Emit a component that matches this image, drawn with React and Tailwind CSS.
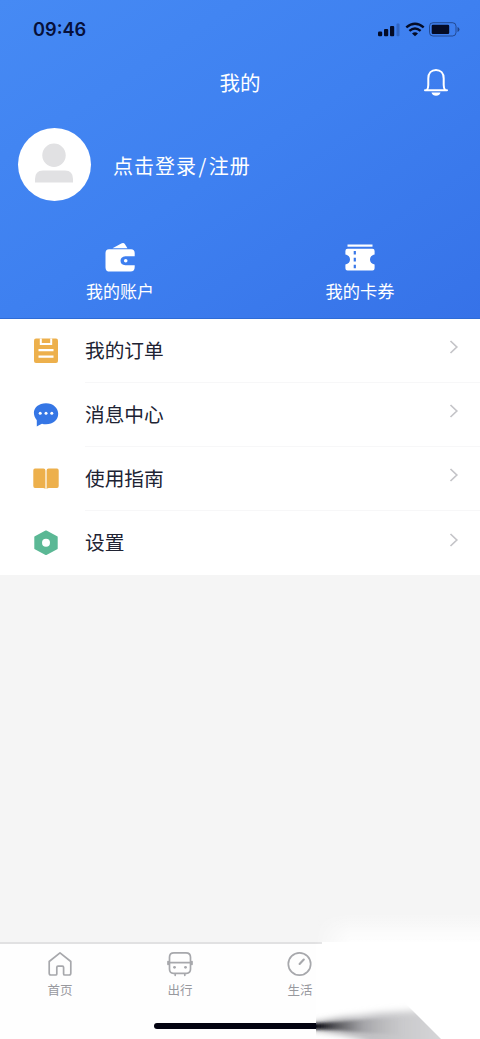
import React from 'react';

function StatusBar() {
  return (
    <div className="flex h-[58px] items-center justify-between pl-[33px] pr-[19px]">
      <span className="font-['Inter','Liberation_Sans',sans-serif] text-[18.2px] font-semibold leading-none text-[#07103a]">09:46</span>
      <svg width="84" height="18" viewBox="0 0 84 18" fill="#040b26">
        <rect x="1" y="11.5" width="4.2" height="4.7" rx="1.2" />
        <rect x="7" y="9" width="4.2" height="7.2" rx="1" />
        <rect x="13" y="6" width="4.2" height="10.2" rx="1" />
        <rect x="19.5" y="3.5" width="3" height="12.7" rx="1" opacity="0.22" />
        <g fill="none" stroke="#040b26" strokeWidth="2.4">
          <path d="M29.3 7.4Q38 0 46.7 7.4" />
          <path d="M32.4 10.9Q38 6.1 43.6 10.9" />
        </g>
        <path d="M35 13.5Q38 11.2 41 13.5L38 16.2Z" />
        <rect x="52.5" y="2.7" width="26.5" height="13.3" rx="3.5" fill="none" stroke="#040b26" strokeOpacity="0.45" />
        <rect x="54.7" y="4.7" width="17.5" height="9.3" rx="1.2" />
        <path d="M80.5 7v5q2-.8 2-2.5t-2-2.5z" opacity="0.5" />
      </svg>
    </div>
  );
}

function BellIcon() {
  return (
    <svg width="28" height="30" viewBox="0 0 28 30" fill="none" stroke="white" strokeWidth="2" strokeLinecap="round" strokeLinejoin="round">
      <path d="M3 22.3H25M4.8 22Q6.3 20.6 6.3 17V10.4C6.3 5.2 9.5 2 14 2S21.7 5.2 21.7 10.4V17Q21.7 20.6 23.2 22" />
      <path d="M9.5 24.5H18.5Q17.5 27.8 14 27.8T9.5 24.5Z" fill="white" stroke="none" />
    </svg>
  );
}

function WalletIcon() {
  return (
    <svg width="30" height="30" viewBox="0 0 30 30" fill="white">
      <path d="M7.5 6.2L16.8 1.3Q18.7.3 19.8 2L22.5 6.2Z" />
      <path d="M4 7.2H26Q29.7 7.2 29.7 11V14.2H20.4Q15.5 14.8 15.5 18.8T20.4 23.3H29.7V25Q29.7 29.6 25.5 29.6H5Q.5 29.6.5 25.4V11Q.5 7.2 4 7.2Z" />
      <circle cx="20.7" cy="18.8" r="1.8" />
    </svg>
  );
}

function CouponIcon() {
  return (
    <svg width="30" height="30" viewBox="0 0 30 30" fill="white">
      <rect x="2.5" y="2.5" width="25" height="2.2" />
      <path d="M2.5 6.8H27.5Q29.6 6.8 29.6 9V12.6Q25 13.6 25 17.6T29.6 22.6V26.3Q29.6 28.6 27.5 28.6H2.5Q.4 28.6 .4 26.3V22.6Q5 21.6 5 17.6T.4 12.6V9Q.4 6.8 2.5 6.8Z" />
      <path d="M9.8 9V12.5M9.8 15.7V19.5M9.8 22.7V26.2" stroke="#3978e9" strokeWidth="2.2" />
    </svg>
  );
}

function OrderIcon() {
  return (
    <svg width="26" height="26" viewBox="0 0 26 26">
      <rect x="1" y="0.5" width="24" height="24.5" rx="2" fill="#edb04c" />
      <path d="M7.8 0.5V6H18.2V0.5" fill="none" stroke="white" strokeWidth="2" />
      <path d="M5.5 12.2H20.5M5.5 18.7H20.5" stroke="white" strokeWidth="2.2" />
    </svg>
  );
}

function MessageIcon() {
  return (
    <svg width="26" height="26" viewBox="0 0 26 26">
      <path d="M3.8 18.3C-2.8 10 2.5 1.2 13 1.2C20.3 1.2 25.2 6 25.2 11.8C25.2 18 20.3 22.3 13 22.3Q10.8 22.3 9 21.8Q6.5 22.8 3.8 24.5Z" fill="#3576e5" />
      <g fill="white"><circle cx="7.2" cy="11.3" r="1.5" /><circle cx="13" cy="11.3" r="1.5" /><circle cx="18.8" cy="11.3" r="1.5" /></g>
    </svg>
  );
}

function GuideIcon() {
  return (
    <svg width="26" height="26" viewBox="0 0 26 26" fill="#edb04c">
      <path d="M2 2.5H10.5Q12.4 2.5 12.4 4.5V23Q11.5 22 10 22H2Q.3 22 .3 20V4.5Q.3 2.5 2 2.5ZM24 2.5H15.5Q13.6 2.5 13.6 4.5V23Q14.5 22 16 22H24Q25.7 22 25.7 20V4.5Q25.7 2.5 24 2.5Z" />
    </svg>
  );
}

function SettingsIcon() {
  return (
    <svg width="26" height="26" viewBox="0 0 26 26">
      <path d="M13 1.5L23.7 7.1V18.4L13 24L2.3 18.4V7.1Z" fill="#5bb895" stroke="#5bb895" strokeWidth="2" strokeLinejoin="round" />
      <circle cx="13" cy="12.8" r="4" fill="white" />
    </svg>
  );
}

function TabIcon({ kind }) {
  return (
    <svg width="28" height="28" viewBox="0 0 28 28" fill="none" stroke="#a7a8ac" strokeWidth="1.7" strokeLinejoin="round" strokeLinecap="round">
      {kind === 'home' && <path d="M14 2.8L24.8 11.5V23.3Q24.8 25 23 25H18.8Q17.6 25 17.6 24V17.4Q17.6 16.2 16.4 16.2H12Q10.8 16.2 10.8 17.4V24Q10.8 25 9.6 25H5Q3.2 25 3.2 23.3V11.5Z" />}
      {kind === 'bus' && <>
        <path d="M3.5 13V7.3Q3.5 2.8 8 2.8H20Q24.5 2.8 24.5 7.3V19Q24.5 23.3 20.5 23.3H7.5Q3.5 23.3 3.5 19ZM3.5 12.7H24.5M2 11.5V14.3M26 11.5V14.3M9.2 24V25.3M18.8 24V25.3" />
        <g fill="#a7a8ac" stroke="none"><circle cx="8.5" cy="17.3" r="1.4" /><circle cx="19.5" cy="17.3" r="1.4" /></g>
      </>}
      {kind === 'life' && <>
        <circle cx="13.5" cy="14" r="11.2" />
        <path d="M13.6 14L17.8 9.5" strokeWidth="2.1" />
      </>}
    </svg>
  );
}

const menuItems = [
  { label: '我的订单', Icon: OrderIcon },
  { label: '消息中心', Icon: MessageIcon },
  { label: '使用指南', Icon: GuideIcon },
  { label: '设置', Icon: SettingsIcon },
];

const tabs = [
  { label: '首页', kind: 'home' },
  { label: '出行', kind: 'bus' },
  { label: '生活', kind: 'life' },
];

function CornerFade() {
  return (
    <svg className="pointer-events-none absolute bottom-0 right-0" width="166" height="139" viewBox="0 0 166 139">
      <defs>
        <linearGradient id="veil" x1="0" y1="0" x2="0" y2="1">
          <stop offset="0" stopColor="white" stopOpacity="0" />
          <stop offset="0.7" stopColor="white" stopOpacity="0.7" />
          <stop offset="1" stopColor="white" stopOpacity="0.9" />
        </linearGradient>
        <linearGradient id="reveal" x1="0" y1="0" x2="1" y2="0">
          <stop offset="0" stopColor="black" />
          <stop offset="0.22" stopColor="white" />
        </linearGradient>
        <mask id="veilMask"><rect width="166" height="46" fill="url(#reveal)" /></mask>
        <linearGradient id="fan" gradientUnits="userSpaceOnUse" x1="2" y1="0" x2="127" y2="0">
          <stop offset="0" stopColor="#77777b" />
          <stop offset="0.35" stopColor="#bdbdc0" />
          <stop offset="1" stopColor="#d5d5d7" />
        </linearGradient>
        <linearGradient id="core" gradientUnits="userSpaceOnUse" x1="2" y1="0" x2="90" y2="0">
          <stop offset="0" stopColor="#03030c" />
          <stop offset="0.22" stopColor="#3d3d42" stopOpacity="0.75" />
          <stop offset="0.55" stopColor="#77777b" stopOpacity="0.35" />
          <stop offset="1" stopColor="#aaaaad" stopOpacity="0" />
        </linearGradient>
        <filter id="soft" x="-20%" y="-60%" width="140%" height="220%"><feGaussianBlur stdDeviation="3.5" /></filter>
        <filter id="coreSoft" x="-20%" y="-100%" width="140%" height="300%"><feGaussianBlur stdDeviation="1.8" /></filter>
        <clipPath id="edge"><path d="M2 85H73L96 108L127 139H2Z" /></clipPath>
      </defs>
      <rect y="12" width="166" height="32" fill="url(#veil)" mask="url(#veilMask)" />
      <rect x="2" y="44" width="164" height="95" fill="white" />
      <rect x="8" y="42" width="158" height="2" fill="white" />
      <g clipPath="url(#edge)">
        <path d="M-8 125L28 118L65 113L110 110L150 150H65C48 138 27 132 -8 128Z" fill="url(#fan)" filter="url(#soft)" />
        <path d="M-8 124L25 122L55 119L90 118V135L55 133L25 130L-8 129Z" fill="url(#core)" filter="url(#coreSoft)" />
      </g>
    </svg>
  );
}

export default function App() {
  return (
    <main className="relative flex h-[1039px] w-[480px] flex-col overflow-hidden bg-[#f5f5f5] font-['Noto_Sans_CJK_SC',sans-serif]">
      <header className="h-[319px] shrink-0 border-b border-[#2e6bd6] bg-gradient-to-br from-[#468af4] via-[#3e80f0] to-[#3672e8] text-white">
        <StatusBar />
        <div className="grid h-[50px] grid-cols-3 items-center px-[30px]">
          <h1 className="col-start-2 -mt-[2px] text-center text-[20.5px] leading-[30px]">我的</h1>
          <button aria-label="消息" className="justify-self-end"><BellIcon /></button>
        </div>
        <div className="flex h-[112px] items-center pl-[18px]">
          <div className="flex size-[73px] items-center justify-center rounded-full bg-white">
            <svg width="40" height="42" viewBox="0 0 40 42" fill="#e1e1e3">
              <circle cx="19" cy="12.2" r="11.7" />
              <path d="M0 39.5V36Q0 27.5 8 27.5H30Q38 27.5 38 36V39.5Z" />
            </svg>
          </div>
          <span className="ml-[22px] mt-[3px] text-[20px] leading-[30px] tracking-[1px]">点击登录<span className="mx-[1.5px]">/</span>注册</span>
        </div>
        <div className="grid grid-cols-2 pt-[22px]">
          <div className="flex flex-col items-center">
            <WalletIcon />
            <span className="mt-[6px] text-[17px] leading-[26px]">我的账户</span>
          </div>
          <div className="flex flex-col items-center">
            <CouponIcon />
            <span className="mt-[6px] text-[17.3px] leading-[26px]">我的卡券</span>
          </div>
        </div>
      </header>

      <nav className="grid h-[256px] shrink-0 grid-rows-4 bg-white pl-[33px]">
        {menuItems.map(({ label, Icon }, index) => (
          <div key={label} className="flex items-center">
            <Icon />
            <div className={index < 3 ? 'ml-[26px] flex h-full flex-1 items-center justify-between border-b border-[#f7f7f8] pr-[19px]' : 'ml-[26px] flex h-full flex-1 items-center justify-between pr-[19px]'}>
              <span className="mb-[2px] text-[19.7px] leading-[30px] text-[#202333]">{label}</span>
              <svg width="14" height="18" viewBox="0 0 14 18" fill="none" stroke="#c4c4c8" strokeWidth="1.7" className="mb-[7px]"><path d="M3.5 3L9.8 9L3.5 15" /></svg>
            </div>
          </div>
        ))}
      </nav>

      <div className="flex-1" />
      <footer className="flex h-[97px] shrink-0 flex-col border-t-2 border-[#e1e1e2] bg-[#fefefe]">
        <div className="grid h-[70px] grid-cols-4 pt-[6px]">
          {tabs.map(({ label, kind }) => (
            <div key={label} className="flex flex-col items-center">
              <TabIcon kind={kind} />
              <span className="mt-[2px] text-[12.5px] leading-[19px] text-[#98999e]">{label}</span>
            </div>
          ))}
        </div>
        <div className="ml-[154px] mt-[9px] h-[6px] w-[172px] rounded-full bg-[#02020f]" />
      </footer>
      <CornerFade />
    </main>
  );
}
